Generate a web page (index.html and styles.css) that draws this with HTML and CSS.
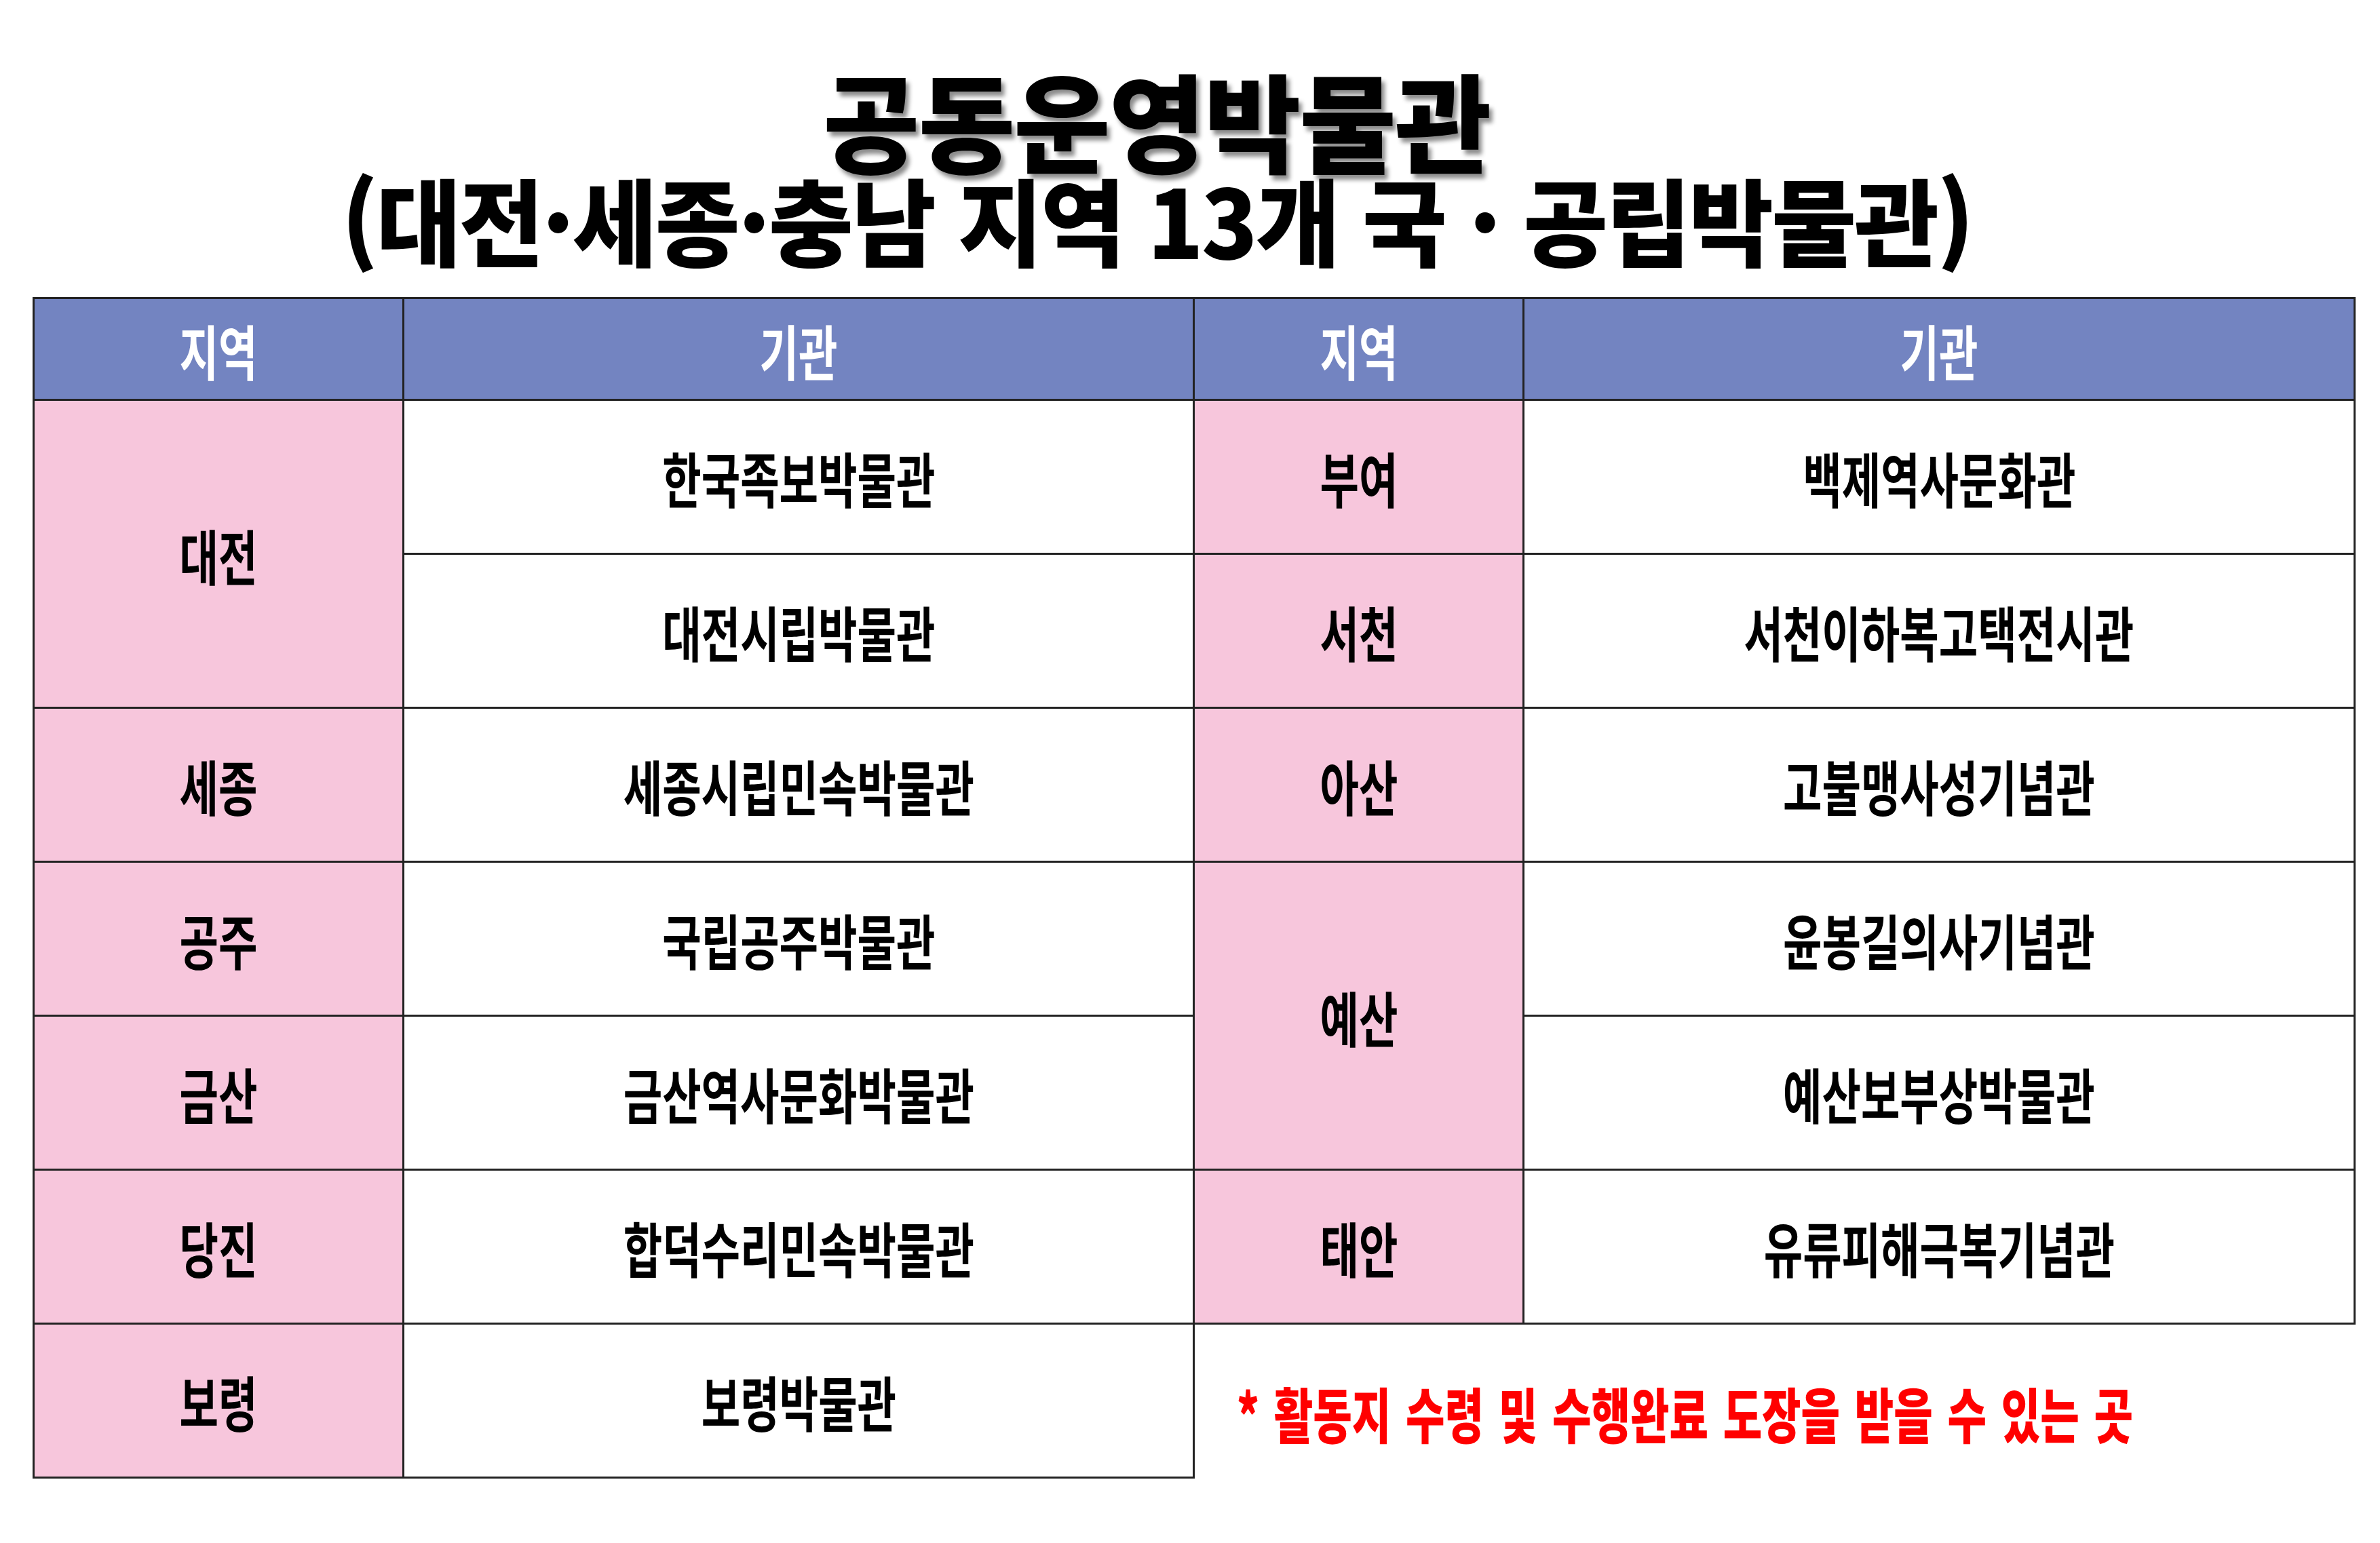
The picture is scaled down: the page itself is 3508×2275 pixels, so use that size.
FILE: index.html
```html
<!DOCTYPE html>
<html lang="ko">
<head>
<meta charset="utf-8">
<title>공동운영박물관</title>
<link rel="stylesheet" href="styles.css">
</head>
<body>
<header class="title">
  <h1 class="title-main"><span class="sq1">공동운영박물관</span></h1>
  <p class="title-sub"><span class="sq2">(대전·세종·충남 지역 13개 국 · 공립박물관)</span></p>
</header>
<table class="museums">
  <colgroup>
    <col class="c1"><col class="c2"><col class="c3"><col class="c4">
  </colgroup>
  <thead>
    <tr class="head">
      <th><span class="t">지역</span></th>
      <th><span class="t">기관</span></th>
      <th><span class="t">지역</span></th>
      <th><span class="t">기관</span></th>
    </tr>
  </thead>
  <tbody>
    <tr>
      <td class="region" rowspan="2"><span class="t">대전</span></td>
      <td><span class="t">한국족보박물관</span></td>
      <td class="region"><span class="t">부여</span></td>
      <td><span class="t">백제역사문화관</span></td>
    </tr>
    <tr>
      <td><span class="t">대전시립박물관</span></td>
      <td class="region"><span class="t">서천</span></td>
      <td><span class="t">서천이하복고택전시관</span></td>
    </tr>
    <tr>
      <td class="region"><span class="t">세종</span></td>
      <td><span class="t">세종시립민속박물관</span></td>
      <td class="region"><span class="t">아산</span></td>
      <td><span class="t">고불맹사성기념관</span></td>
    </tr>
    <tr>
      <td class="region"><span class="t">공주</span></td>
      <td><span class="t">국립공주박물관</span></td>
      <td class="region" rowspan="2"><span class="t">예산</span></td>
      <td><span class="t">윤봉길의사기념관</span></td>
    </tr>
    <tr>
      <td class="region"><span class="t">금산</span></td>
      <td><span class="t">금산역사문화박물관</span></td>
      <td><span class="t">예산보부상박물관</span></td>
    </tr>
    <tr>
      <td class="region"><span class="t">당진</span></td>
      <td><span class="t">합덕수리민속박물관</span></td>
      <td class="region"><span class="t">태안</span></td>
      <td><span class="t">유류피해극복기념관</span></td>
    </tr>
    <tr>
      <td class="region"><span class="t">보령</span></td>
      <td><span class="t">보령박물관</span></td>
      <td class="note" colspan="2"><span class="t">* 활동지 수령 및 수행완료 도장을 받을 수 있는 곳</span></td>
    </tr>
  </tbody>
</table>
</body>
</html>
```

FILE: styles.css
```css
html, body {
  margin: 0;
  padding: 0;
  background: #ffffff;
}

body {
  width: 3508px;
  height: 2275px;
  overflow: hidden;
  font-family: "Noto Sans CJK KR", "Noto Sans", sans-serif;
  color: #000000;
}

.title {
  padding-top: 96px;
  padding-right: 98px;
  text-align: center;
}

.title-main {
  margin: 0;
  font-size: 158px;
  line-height: 158px;
  font-weight: 900;
}

.sq1 {
  display: inline-block;
  transform: scaleX(0.98);
  text-shadow: 5px 7px 6px rgba(0, 0, 0, 0.45);
  letter-spacing: -2px;
}

.title-sub {
  margin: -3px 0 0 0;
  font-size: 140px;
  line-height: 140px;
  font-weight: 900;
}

.sq2 {
  display: inline-block;
  transform: scaleX(0.97);
  letter-spacing: -3px;
}

.museums {
  margin: 47px 0 0 48px;
  border-collapse: collapse;
  table-layout: fixed;
  width: 3421px;
}

.c1 { width: 545px; }
.c2 { width: 1165px; }
.c3 { width: 486px; }
.c4 { width: 1225px; }

.museums th,
.museums td {
  border: 3px solid #222222;
  padding: 0;
  text-align: center;
  vertical-align: middle;
  font-size: 88px;
  font-weight: 700;
  line-height: 1;
  white-space: nowrap;
  overflow: hidden;
}

.museums tr {
  height: 227px;
}

.museums tr.head {
  height: 150px;
}

.museums th {
  background: #7384c1;
  color: #ffffff;
}

.museums td.region {
  background: #f7c6dc;
}

.t {
  display: inline-block;
  transform: scaleX(0.71);
}

.museums td.note {
  border-right: none;
  border-bottom: none;
  text-align: left;
  padding: 32px 0 0 0;
  color: #ff0000;
  font-weight: 800;
}

.museums td.note .t {
  transform-origin: left center;
  margin-left: 62px;
  word-spacing: 6px;
}
```
